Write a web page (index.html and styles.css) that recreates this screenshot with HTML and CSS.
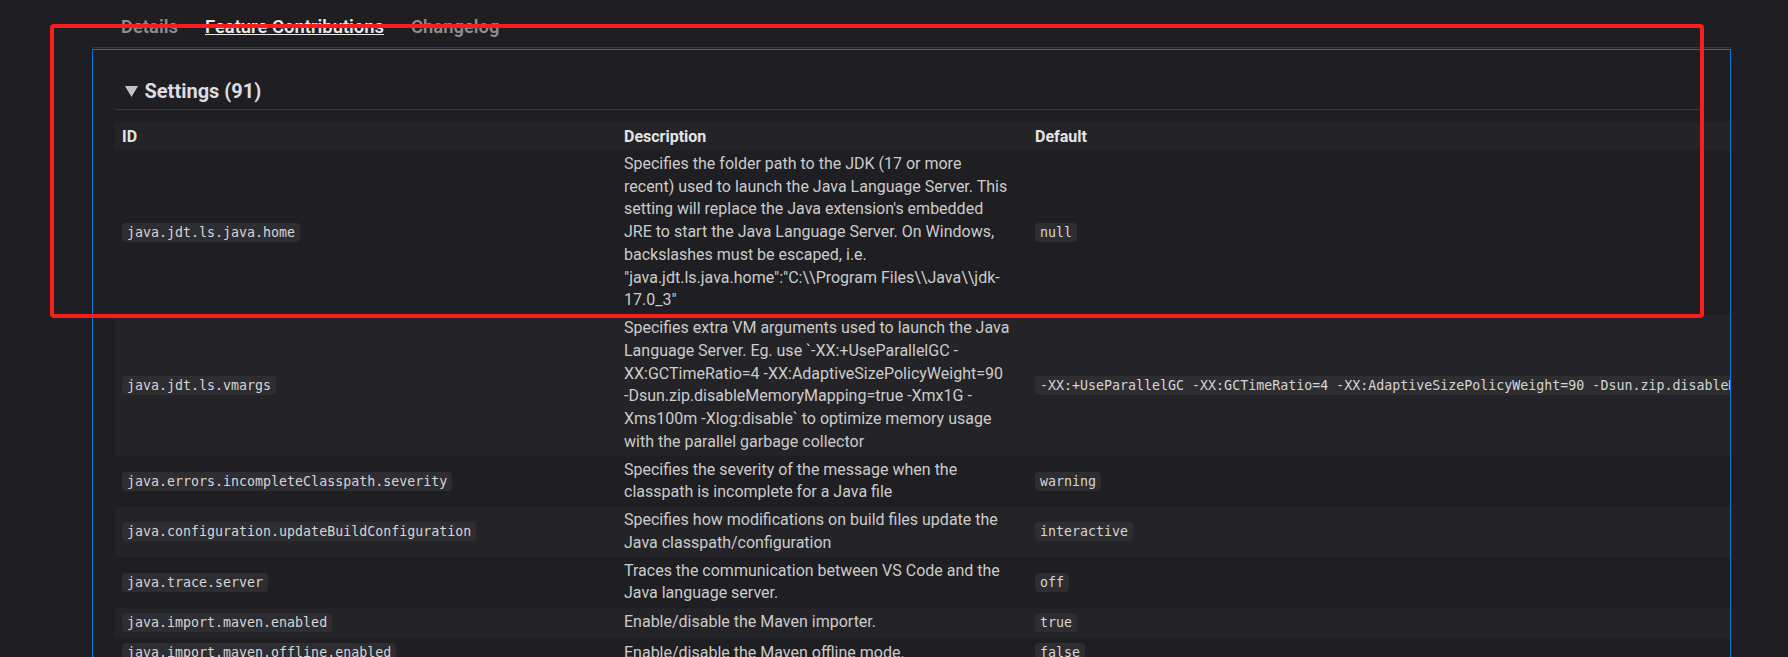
FILE: index.html
```html
<!DOCTYPE html>
<html lang="en">
<head>
<meta charset="utf-8">
<title>Feature Contributions</title>
<link rel="stylesheet" href="styles.css">
</head>
<body>
<div class="page">
  <nav class="navbar">
    <span class="tab">Details</span>
    <span class="tab active">Feature Contributions</span>
    <span class="tab">Changelog</span>
  </nav>
  <section class="content">
    <details class="section" open>
      <summary class="section-title">
        <svg class="twisty" width="13" height="11" viewBox="0 0 13 11"><polygon points="0,0 13,0 6.5,11"/></svg>
        <span>Settings (91)</span>
      </summary>
      <table class="settings">
        <colgroup>
          <col class="col-id">
          <col class="col-desc">
          <col class="col-default">
        </colgroup>
        <thead>
          <tr><th>ID</th><th>Description</th><th>Default</th></tr>
        </thead>
        <tbody>
          <tr>
            <td><code>java.jdt.ls.java.home</code></td>
            <td class="desc">Specifies the folder path to the JDK (17 or more recent) used to launch the Java Language Server. This setting will replace the Java extension's embedded JRE to start the Java Language Server. On Windows, backslashes must be escaped, i.e. "java.jdt.ls.java.home":"C:\\Program Files\\Java\\jdk-17.0_3"</td>
            <td><code>null</code></td>
          </tr>
          <tr>
            <td><code>java.jdt.ls.vmargs</code></td>
            <td class="desc">Specifies extra VM arguments used to launch the Java Language Server. Eg. use `-XX:+UseParallelGC -XX:GCTimeRatio=4 -XX:AdaptiveSizePolicyWeight=90 <span class="nobr">-Dsun.zip.disableMemoryMapping=true</span> -Xmx1G -Xms100m -Xlog:disable` to optimize memory usage with the parallel garbage collector</td>
            <td><code>-XX:+UseParallelGC -XX:GCTimeRatio=4 -XX:AdaptiveSizePolicyWeight=90 -Dsun.zip.disableMemoryMapping=true -Xmx1G -Xms100m -Xlog:disable</code></td>
          </tr>
          <tr>
            <td><code>java.errors.incompleteClasspath.severity</code></td>
            <td class="desc">Specifies the severity of the message when the classpath is incomplete for a Java file</td>
            <td><code>warning</code></td>
          </tr>
          <tr>
            <td><code>java.configuration.updateBuildConfiguration</code></td>
            <td class="desc">Specifies how modifications on build files update the Java classpath/configuration</td>
            <td><code>interactive</code></td>
          </tr>
          <tr>
            <td><code>java.trace.server</code></td>
            <td class="desc">Traces the communication between VS Code and the Java language server.</td>
            <td><code>off</code></td>
          </tr>
          <tr>
            <td><code>java.import.maven.enabled</code></td>
            <td class="desc">Enable/disable the Maven importer.</td>
            <td><code>true</code></td>
          </tr>
          <tr>
            <td><code>java.import.maven.offline.enabled</code></td>
            <td class="desc">Enable/disable the Maven offline mode.</td>
            <td><code>false</code></td>
          </tr>
        </tbody>
      </table>
    </details>
  </section>
</div>
<div class="annotation"></div>
</body>
</html>
```

FILE: styles.css
```css
html, body {
  margin: 0;
  padding: 0;
  height: 100%;
  overflow: hidden;
  background: #1f1e22;
}

body {
  font-family: Roboto, "Noto Sans", "Liberation Sans", sans-serif;
  color: #cccccc;
  position: relative;
}

.page {
  margin-left: 92px;
  width: 1639px;
}

.navbar {
  display: flex;
  gap: 27px;
  height: 48px;
  box-sizing: border-box;
  padding: 16px 0 0 29px;
  border-bottom: 1px solid #39383d;
  font-size: 18.4px;
  line-height: 22px;
  font-weight: 600;
}

.tab {
  color: #8d8d90;
  white-space: nowrap;
}

.tab.active {
  color: #e8e8e8;
  text-decoration: underline;
  text-decoration-thickness: 1px;
  text-underline-offset: 1px;
}

.content {
  margin-top: 1px;
  border: 1px solid #0b78d0;
  padding: 0 30px 0 22px;
  overflow: hidden;
  height: 700px;
}

.section-title {
  list-style: none;
  display: flex;
  align-items: center;
  margin-top: 26px;
  padding: 0 0 3px 10px;
  height: 30px;
  line-height: 30px;
  border-bottom: 1px solid #38373c;
  font-size: 20px;
  font-weight: 700;
  color: #dcdde2;
  cursor: pointer;
}

.section-title::-webkit-details-marker {
  display: none;
}

.twisty {
  fill: #c4c4c8;
  margin-right: 6.5px;
  flex: none;
}

.settings {
  margin-top: 12px;
  border-collapse: collapse;
  border-spacing: 0;
  table-layout: fixed;
  width: 2100px;
  font-size: 16px;
  line-height: 22.75px;
}

.col-id { width: 502px; }
.col-desc { width: 411px; }
.col-default { width: 1187px; }

.settings th {
  text-align: left;
  font-weight: 700;
  color: #e4e4e6;
  padding: 4px 7px 1.5px;
}

.settings td {
  padding: 2.5px 7px;
  vertical-align: middle;
}

.settings td.desc {
  padding-right: 15px;
}

.nobr {
  white-space: nowrap;
}

.settings thead tr,
.settings tbody tr:nth-child(even) {
  background: #242327;
}

.settings code {
  display: inline-block;
  vertical-align: middle;
  margin: 3px 0;
  padding: 1px 5px;
  font-family: "DejaVu Sans Mono", "Liberation Mono", monospace;
  font-size: 13.3px;
  line-height: 17.4px;
  color: #d6d6d6;
  background: #2e2d32;
  border-radius: 4px;
  white-space: nowrap;
}

.annotation {
  position: absolute;
  top: 24px;
  left: 50px;
  width: 1654px;
  height: 294px;
  box-sizing: border-box;
  border: 4px solid #fc1d1d;
  border-radius: 4px;
  pointer-events: none;
}
```
